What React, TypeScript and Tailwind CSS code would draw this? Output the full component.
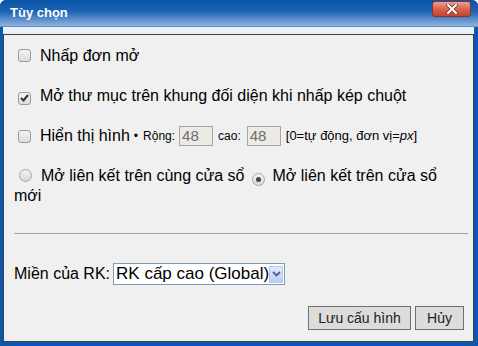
import React from "react";

function CheckBox({ checked = false }: { checked?: boolean }) {
  return (
    <span className="inline-flex items-center justify-center w-[13px] h-[13px] ml-[4px] mr-[9px] rounded-[3px] border border-[#9a9a9a] bg-[linear-gradient(to_bottom,#f4f4f4,#dcdcdc)] align-[-1px]">
      {checked && (
        <svg width="9" height="8" viewBox="0 0 9 8">
          <path d="M1 4 L3.5 6.5 L8 1" fill="none" stroke="#333" strokeWidth="2" />
        </svg>
      )}
    </span>
  );
}

function Radio({ checked = false, className = "" }: { checked?: boolean; className?: string }) {
  return (
    <span
      className={
        "inline-flex items-center justify-center w-[13px] h-[13px] rounded-full border border-[#a6a6a6] bg-[linear-gradient(to_bottom,#f2f2f2,#d8d8d8)] align-[-1px] " +
        className
      }
    >
      {checked && <span className="w-[5px] h-[5px] rounded-full bg-[#444]" />}
    </span>
  );
}

export default function App() {
  return (
    <div className="w-[478px] h-[346px] flex flex-col bg-[#0b58b0] rounded-t-[6px] overflow-hidden font-['Liberation_Sans',Arial,sans-serif] text-black">
      {/* Title bar */}
      <div className="relative h-[27px] shrink-0 bg-[linear-gradient(to_bottom,#0a54a8_0%,#1d64b4_45%,#90b3de_100%)] border-b border-[#6d8fbb]">
        <span className="absolute left-[10px] top-[5px] text-[13px] font-bold text-white leading-[16px]">
          Tùy chọn
        </span>
        <div className="absolute left-[432px] top-[1px] w-[39px] h-[16px] rounded-[3px] border border-[#8a3326] bg-[linear-gradient(to_bottom,#eba08f_0%,#d9634c_50%,#c2432d_100%)] flex items-center justify-center">
          <svg width="12" height="10" viewBox="0 0 12 10">
            <path d="M2 1 L10 9 M10 1 L2 9" stroke="#6b2a20" strokeWidth="3.4" strokeLinecap="square" />
            <path d="M2 1 L10 9 M10 1 L2 9" stroke="#fff" strokeWidth="2" strokeLinecap="square" />
          </svg>
        </div>
      </div>

      {/* Body frame */}
      <div className="flex-1 flex flex-col pl-[3px] pr-[4px] pb-[4px]">
        <div className="h-[7px] shrink-0 bg-[#e9f1fa]" />
        <div className="flex-1 flex flex-col bg-[#f0f0f0] border border-[#3f3f3f] pl-[10px] pr-[5px] pt-[11px] text-[16px] leading-[20px]">
          <div className="h-[20px] whitespace-nowrap">
            <CheckBox />
            Nhấp đơn mở
          </div>
          <div className="h-[20px] mt-[20px] whitespace-nowrap">
            <CheckBox checked />
            Mở thư mục trên khung đối diện khi nhấp kép chuột
          </div>
          <div className="h-[20px] mt-[20px] flex items-center whitespace-nowrap">
            <CheckBox />
            <span>Hiển thị hình</span>
            <span className="ml-[4px] mr-[5px] text-[12px]">•</span>
            <span className="text-[12px]">Rộng:</span>
            <span className="ml-[4px] w-[34px] h-[20px] border border-[#a5a5a5] bg-[#ebebe4] text-[#6d6d6d] text-[15px] leading-[18px] pl-[2px]">
              48
            </span>
            <span className="ml-[5px] text-[12px]">cao:</span>
            <span className="ml-[6px] w-[34px] h-[20px] border border-[#a5a5a5] bg-[#ebebe4] text-[#6d6d6d] text-[15px] leading-[18px] pl-[2px]">
              48
            </span>
            <span className="ml-[5px] text-[13px]">
              [0=tự động, đơn vị=<i>px</i>]
            </span>
          </div>
          <div className="mt-[20px]">
            <div className="h-[20px] whitespace-nowrap">
              <Radio className="ml-[5px] mr-[9px]" />
              <span>Mở liên kết trên cùng cửa sổ</span>
              <Radio checked className="ml-[7px] mr-[8px]" />
              <span>Mở liên kết trên cửa sổ</span>
            </div>
            <div className="h-[20px]">mới</div>
          </div>
          <div className="mt-[27px] h-px bg-[#a0a0a0]" />
          <div className="mt-[29px] flex items-center h-[22px]">
            <span>Miền của RK:</span>
            <div className="ml-[3px] w-[172px] h-[22px] border border-[#7f9db9] bg-white flex items-center pl-[2px] pr-[1px]">
              <span className="flex-1 whitespace-nowrap text-[17px]">RK cấp cao (Global)</span>
              <span className="w-[16px] h-[17px] border border-[#b3c8ec] bg-[linear-gradient(to_bottom,#e1eafe,#b9cef5)] flex items-center justify-center">
                <svg width="9" height="6" viewBox="0 0 9 6">
                  <path d="M1 1 L4.5 4.5 L8 1" fill="none" stroke="#4d6185" strokeWidth="1.8" />
                </svg>
              </span>
            </div>
          </div>
          <div className="mt-[21px] mr-[4px] flex justify-end gap-[4px]">
            <button className="w-[103px] h-[24px] border border-[#707070] bg-[#dcdcdc] text-[14px] text-[#222]">
              Lưu cấu hình
            </button>
            <button className="w-[49px] h-[24px] border border-[#707070] bg-[#dcdcdc] text-[14px] text-[#222]">
              Hủy
            </button>
          </div>
        </div>
      </div>
    </div>
  );
}
